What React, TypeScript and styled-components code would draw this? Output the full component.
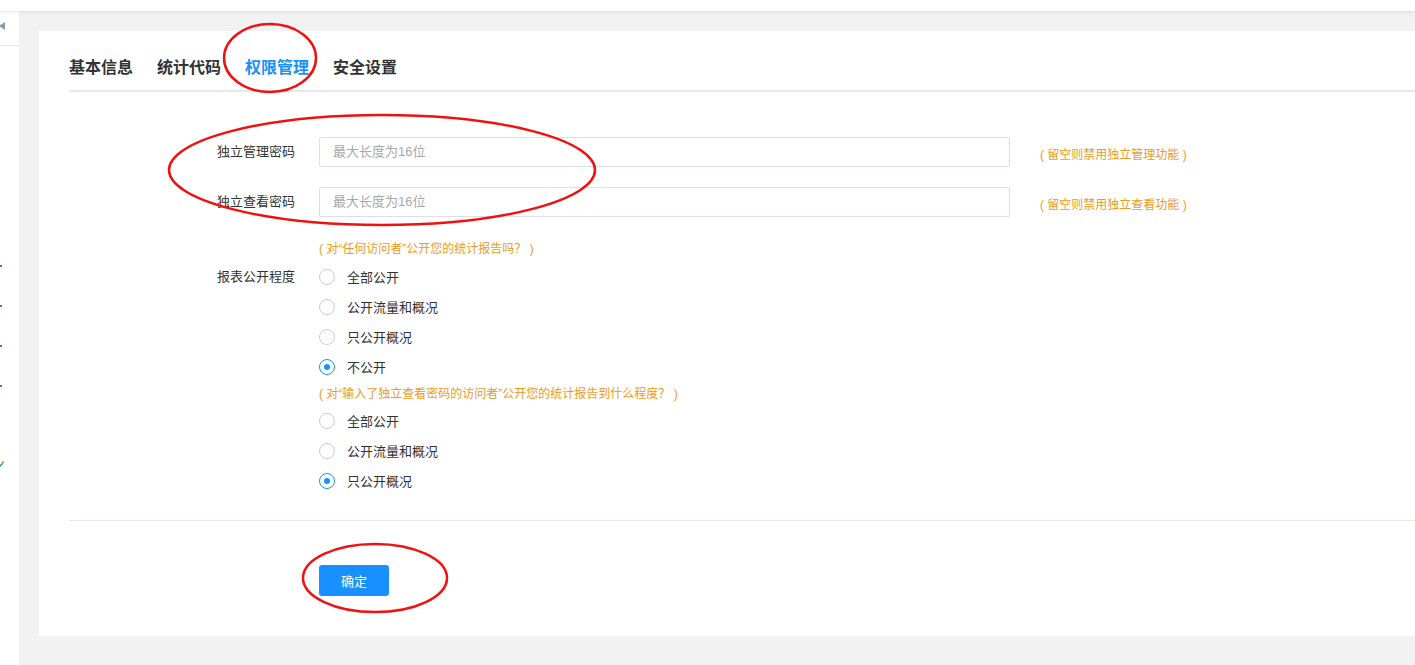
import styled, { createGlobalStyle } from 'styled-components';
import { useState } from 'react';

const GlobalStyle = createGlobalStyle`
  html, body {
    margin: 0;
    padding: 0;
    background: #f2f2f2;
    font-family: "Liberation Sans", "Noto Sans CJK SC", sans-serif;
    color: #333;
  }
  * { box-sizing: border-box; }
`;

const TABS = ['基本信息', '统计代码', '权限管理', '安全设置'];

const PUBLIC_OPTIONS = ['全部公开', '公开流量和概况', '只公开概况', '不公开'];
const VIEWER_OPTIONS = ['全部公开', '公开流量和概况', '只公开概况'];

export default function App() {
  // 当前标签
  const [activeTab, setActiveTab] = useState<number>(2);

  // 密码
  const [adminPwd, setAdminPwd] = useState<string>('');
  const [viewPwd, setViewPwd] = useState<string>('');

  // 公开程度
  const [publicLevel, setPublicLevel] = useState<number>(3);
  const [viewerLevel, setViewerLevel] = useState<number>(2);

  return (
    <Page>
      <GlobalStyle />
      <Header />
      <Body>
        <Sidebar>
          <SideTop>
            <svg width="8" height="10" viewBox="0 0 8 10">
              <path d="M7 1 L1 5 L7 9 Z" fill="#8c9bb0" />
            </svg>
          </SideTop>
          <SideDots>
            {[0, 1, 2, 3].map((i) => (
              <Dot key={i} />
            ))}
            <svg width="8" height="8" viewBox="0 0 8 8">
              <path d="M1 7 L6 2" stroke="#4a8fd6" strokeWidth="1.6" />
              <path d="M5 2 L7 0.5" stroke="#e39a3c" strokeWidth="1.6" />
            </svg>
          </SideDots>
        </Sidebar>

        <Main>
          <Card>
            <TabBar>
              {TABS.map((tab, index) => (
                <Tab
                  key={tab}
                  $active={activeTab === index}
                  onClick={() => setActiveTab(index)}
                >
                  {tab}
                </Tab>
              ))}
            </TabBar>

            <Form>
              {/* 独立管理密码 */}
              <Row>
                <Label>独立管理密码</Label>
                <Input
                  type="text"
                  value={adminPwd}
                  onChange={(e) => setAdminPwd(e.target.value)}
                  maxLength={16}
                  placeholder="最大长度为16位"
                />
                <SideTip>( 留空则禁用独立管理功能 )</SideTip>
              </Row>

              {/* 独立查看密码 */}
              <Row>
                <Label>独立查看密码</Label>
                <Input
                  type="text"
                  value={viewPwd}
                  onChange={(e) => setViewPwd(e.target.value)}
                  maxLength={16}
                  placeholder="最大长度为16位"
                />
                <SideTip>( 留空则禁用独立查看功能 )</SideTip>
              </Row>

              {/* 报表公开程度 */}
              <TipRow>
                <Label />
                <Tip $gap={3}>( 对“任何访问者”公开您的统计报告吗？ )</Tip>
              </TipRow>
              <RadioRow>
                <Label>报表公开程度</Label>
                <RadioGroup>
                  {PUBLIC_OPTIONS.map((opt, i) => (
                    <RadioItem key={opt} onClick={() => setPublicLevel(i)}>
                      <RadioCircle $checked={publicLevel === i} />
                      {opt}
                    </RadioItem>
                  ))}
                  <Tip $gap={2}>( 对“输入了独立查看密码的访问者”公开您的统计报告到什么程度？ )</Tip>
                  {VIEWER_OPTIONS.map((opt, i) => (
                    <RadioItem key={opt} onClick={() => setViewerLevel(i)}>
                      <RadioCircle $checked={viewerLevel === i} />
                      {opt}
                    </RadioItem>
                  ))}
                </RadioGroup>
              </RadioRow>
            </Form>

            <Divider />

            <Footer>
              <SubmitBtn type="submit">确定</SubmitBtn>
            </Footer>
          </Card>
        </Main>
      </Body>

      {/* 标注圈 */}
      <Marks width="1415" height="665" viewBox="0 0 1415 665">
        <ellipse cx="270" cy="58" rx="46" ry="34" />
        <ellipse cx="382" cy="170" rx="213" ry="55" />
        <ellipse cx="375" cy="578" rx="72" ry="34" />
      </Marks>
    </Page>
  );
}

const Page = styled.div`
  position: relative;
  width: 1415px;
  height: 665px;
  overflow: hidden;
  background: #f2f2f2;
`;

const Header = styled.div`
  height: 11px;
  background: #fff;
  box-shadow: 0 1px 4px rgba(0, 0, 0, 0.1);
  position: relative;
  z-index: 1;
`;

const Body = styled.div`
  display: flex;
  height: 654px;
`;

const Sidebar = styled.div`
  width: 19px;
  background: #fff;
  display: flex;
  flex-direction: column;
`;

const SideTop = styled.div`
  height: 35px;
  border-bottom: 1px solid #e6e6e6;
  display: flex;
  align-items: center;
  margin-left: -2px;
  padding-bottom: 4px;
`;

const SideDots = styled.div`
  display: flex;
  flex-direction: column;
  gap: 38px;
  padding-top: 219px;
  margin-left: -1px;

  svg {
    margin-top: 36px;
    margin-left: -2px;
  }
`;

const Dot = styled.div`
  width: 3px;
  height: 2px;
  background: #4a7bbf;
`;

const Main = styled.div`
  flex: 1;
  display: flex;
  padding: 20px 0 29px 20px;
`;

const Card = styled.div`
  flex: 1;
  background: #fff;
  padding: 0 0 39px 30px;
  display: flex;
  flex-direction: column;
`;

const TabBar = styled.div`
  display: flex;
  gap: 24px;
  padding-top: 25px;
  padding-bottom: 10px;
  border-bottom: 2px solid #e4e7ed;
`;

const Tab = styled.div<{ $active?: boolean }>`
  font-size: 16px;
  font-weight: 700;
  line-height: 24px;
  color: ${({ $active }) => ($active ? '#1890ff' : '#333')};
  cursor: pointer;
`;

const Form = styled.div`
  display: flex;
  flex-direction: column;
  padding-top: 45px;
`;

const Row = styled.div`
  display: flex;
  align-items: center;
  margin-bottom: 20px;
`;

const Label = styled.div`
  width: 250px;
  flex-shrink: 0;
  padding-right: 24px;
  padding-bottom: 1px;
  text-align: right;
  font-size: 13px;
  color: #333;
  line-height: 29px;
`;

const Input = styled.input`
  width: 691px;
  height: 30px;
  border: 1px solid #dcdfe6;
  border-radius: 2px;
  padding: 0 13px 1px;
  font-size: 13px;
  font-family: inherit;
  color: #333;
  outline: none;

  &::placeholder {
    color: #a8a8a8;
  }
`;

const SideTip = styled.span`
  margin-left: 30px;
  margin-top: 2px;
  font-size: 12px;
  color: #ec9b22;
`;

const TipRow = styled.div`
  display: flex;
`;

const Tip = styled.div<{ $gap: number }>`
  font-size: 12px;
  line-height: 20px;
  color: #ec9b22;
  padding-top: 2px;
  margin-bottom: ${({ $gap }) => $gap}px;
`;

const RadioRow = styled.div`
  display: flex;
  align-items: flex-start;
`;

const RadioGroup = styled.div`
  display: flex;
  flex-direction: column;
`;

const RadioItem = styled.label`
  display: flex;
  align-items: center;
  gap: 12px;
  height: 30px;
  padding-bottom: 1px;
  font-size: 13px;
  color: #333;
  cursor: pointer;
`;

const RadioCircle = styled.span<{ $checked?: boolean }>`
  width: 16px;
  height: 16px;
  border-radius: 50%;
  border: 1px solid ${({ $checked }) => ($checked ? '#1890ff' : '#cfcfcf')};
  display: flex;
  align-items: center;
  justify-content: center;

  &::after {
    content: '';
    width: 6px;
    height: 6px;
    border-radius: 50%;
    background: ${({ $checked }) => ($checked ? '#1890ff' : 'transparent')};
  }
`;

const Divider = styled.div`
  margin-top: 24px;
  height: 1px;
  background: #e4e7ed;
`;

const Footer = styled.div`
  padding-top: 44px;
  padding-left: 250px;
`;

const SubmitBtn = styled.button`
  width: 70px;
  height: 31px;
  background: #1890ff;
  border: none;
  border-radius: 3px;
  color: #fff;
  font-size: 13px;
  font-family: inherit;
  cursor: pointer;
`;

const Marks = styled.svg`
  position: absolute;
  left: 0;
  top: 0;
  pointer-events: none;

  ellipse {
    fill: none;
    stroke: #f01010;
    stroke-width: 2.5;
  }
`;
